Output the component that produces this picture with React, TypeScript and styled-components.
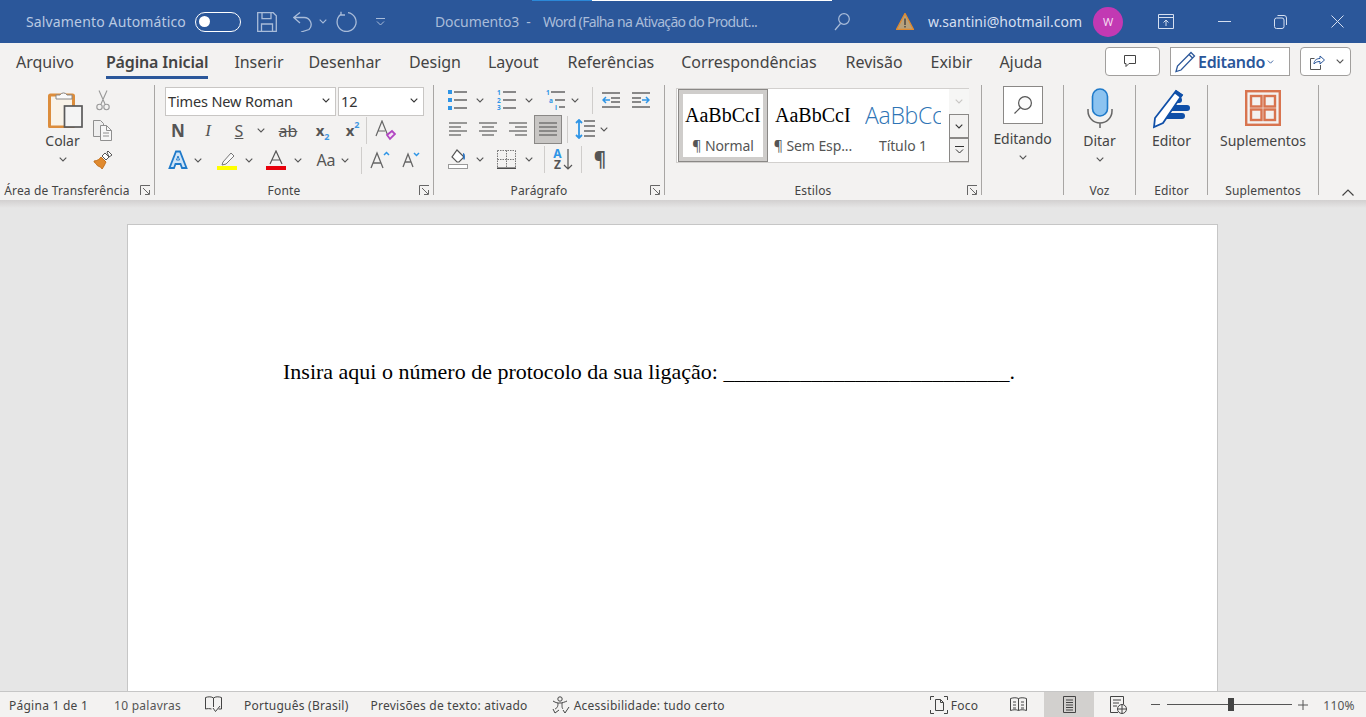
import React from "react";
import styled, { createGlobalStyle } from "styled-components";

const Global = createGlobalStyle`
  html, body { margin: 0; padding: 0; height: 100%; overflow: hidden; background: #e6e6e6; }
  body { font-family: "Noto Sans", "Open Sans", sans-serif; }
  * { box-sizing: border-box; }
  svg { display: block; }
`;

const Shell = styled.div`
  width: 1366px; height: 717px; display: flex; flex-direction: column; overflow: hidden;
`;
const TitleBar = styled.header`
  position: relative; height: 43px; flex: none; background: #2b579a; display: flex; align-items: center;
`;
const TitleStrip = styled.div`
  position: absolute; top: 0; left: 532px; width: 300px; height: 1px;
  background: linear-gradient(90deg, #2b88d8 0 60px, #ffffff 60px);
`;
const TitleText = styled.span<{ $ml: number; $w?: number; $c?: string; $ls: number }>`
  margin-left: ${(p) => p.$ml}px; width: ${(p) => (p.$w ? `${p.$w}px` : "auto")};
  color: ${(p) => p.$c || "#b9c9e2"}; font-size: 14px; letter-spacing: ${(p) => p.$ls}px;
  white-space: pre; flex: none;
`;
const TitleIcon = styled.span<{ $ml: number; $w: number }>`
  margin-left: ${(p) => p.$ml}px; width: ${(p) => p.$w}px; flex: none; display: flex; justify-content: center; align-items: center;
`;
const Toggle = styled.span`
  margin-left: 9px; width: 46px; height: 20px; border: 1.5px solid #fff; border-radius: 10px; flex: none;
  display: flex; align-items: center; padding-left: 3px;
`;
const ToggleKnob = styled.span`
  width: 11px; height: 11px; border-radius: 50%; background: #fff;
`;
const Avatar = styled.span`
  margin-left: 11px; width: 30px; height: 30px; border-radius: 50%; background: #c239b3; color: #f6d9f2;
  font-size: 11px; display: flex; align-items: center; justify-content: center; flex: none;
`;

const TabRow = styled.nav`
  height: 37px; flex: none; background: #f3f2f1; display: flex; align-items: flex-start; padding-left: 16px;
`;
const Tab = styled.span<{ $active?: boolean; $ml: number }>`
  margin-left: ${(p) => p.$ml}px; height: 36px; padding-top: 8px; font-size: 16px; line-height: 22px; color: #444;
  letter-spacing: ${(p) => (p.$active ? "-0.15px" : "-0.04px")}; white-space: nowrap; flex: none;
  font-weight: ${(p) => (p.$active ? 600 : 400)};
  border-bottom: 3px solid ${(p) => (p.$active ? "#2b579a" : "transparent")};
`;
const TabActions = styled.div`
  margin-left: auto; margin-right: 15px; display: flex; gap: 10px; padding-top: 4px;
`;
const ActionButton = styled.span<{ $w: number; $square?: boolean; $gap?: number; $pad?: string }>`
  width: ${(p) => p.$w}px; height: 29px; background: #fff; border: 1px solid #a19f9d;
  border-radius: ${(p) => (p.$square ? "0" : "4px")}; display: flex; align-items: center; justify-content: flex-start;
  gap: ${(p) => p.$gap ?? 3}px; padding: ${(p) => p.$pad || "0"};
  color: #2b579a; font-size: 16px; font-weight: 600; letter-spacing: -0.3px;
`;

const Ribbon = styled.section`
  height: 120px; flex: none; background: #f3f2f1; display: flex; padding-top: 5px; position: relative;
`;
const Group = styled.div<{ $w: number }>`
  width: ${(p) => p.$w}px; height: 110px; flex: none; border-right: 1px solid #a8a6a4; display: flex; flex-direction: column;
`;
const GroupBody = styled.div`
  flex: 1; min-height: 0; display: flex; flex-direction: column;
`;
const GroupFooter = styled.div<{ $launcher?: boolean }>`
  position: relative; height: 20px; flex: none; text-align: center; font-size: 12px; line-height: 32px; color: #444;
  letter-spacing: 0.15px; white-space: nowrap; padding-right: ${(p) => (p.$launcher ? "20px" : "0")};
`;
const Launcher = styled.span`
  position: absolute; right: 3px; top: 10px;
`;
const Collapse = styled.span`
  position: absolute; left: 1342px; top: 109px;
`;
const Row = styled.div<{ $h: number; $top?: number }>`
  height: ${(p) => p.$h}px; margin-top: ${(p) => p.$top || 0}px; display: flex; align-items: center; flex: none;
`;
const Cell = styled.span<{ $w: number; $ml?: number; $selected?: boolean }>`
  width: ${(p) => p.$w}px; margin-left: ${(p) => p.$ml || 0}px; flex: none; display: flex; align-items: center; justify-content: center;
  height: ${(p) => (p.$selected ? "29px" : "auto")};
  background: ${(p) => (p.$selected ? "#c8c6c4" : "transparent")};
  border: ${(p) => (p.$selected ? "1px solid #8a8886" : "none")};
`;
const RowSep = styled.span<{ $ml: number }>`
  width: 1px; height: 27px; margin-left: ${(p) => p.$ml}px; background: #cfcdcb; flex: none;
`;
const Combo = styled.span<{ $w: number; $ml: number }>`
  width: ${(p) => p.$w}px; height: 29px; margin-left: ${(p) => p.$ml}px; background: #fff; border: 1px solid #c8c6c4;
  display: flex; align-items: center; justify-content: space-between; padding: 0 5px 2px 2px; color: #333; font-size: 14.5px; letter-spacing: -0.13px;
`;
const Glyph = styled.span<{ $f?: string; $s: number; $b?: boolean; $i?: boolean; $u?: boolean; $st?: boolean; $c?: string }>`
  font-family: ${(p) => p.$f || '"Noto Sans", sans-serif'}; font-size: ${(p) => p.$s}px; line-height: 1;
  font-weight: ${(p) => (p.$b ? 700 : 400)}; font-style: ${(p) => (p.$i ? "italic" : "normal")};
  text-decoration: ${(p) => (p.$u ? "underline" : p.$st ? "line-through" : "none")}; color: ${(p) => p.$c || "#555"};
  position: relative; white-space: nowrap;
`;
const Sub = styled.span<{ $up?: boolean }>`
  position: absolute; left: 100%; ${(p) => (p.$up ? "top: -3px" : "bottom: -3px")}; color: #3d97e0; font-size: 9px; font-weight: 700;
`;
const SortWrap = styled.span`
  display: flex; align-items: center; gap: 1px;
`;
const SortLetters = styled.span`
  display: flex; flex-direction: column; align-items: center;
`;
const SortLetter = styled.span<{ $blue?: boolean }>`
  font-size: 12px; line-height: 11px; height: 11px; font-weight: 700; color: ${(p) => (p.$blue ? "#2e95e6" : "#555")}; overflow: visible;
`;

const LargeButton = styled.div<{ $pt: number }>`
  display: flex; flex-direction: column; align-items: center; padding-top: ${(p) => p.$pt}px; width: 100%;
`;
const LargeLabel = styled.span<{ $mt: number }>`
  margin-top: ${(p) => p.$mt}px; font-size: 14px; line-height: 20px; color: #444; letter-spacing: -0.05px; white-space: nowrap;
`;
const ChevWrap = styled.span<{ $mt: number }>`
  margin-top: ${(p) => p.$mt}px;
`;
const ClipArea = styled.div`
  display: flex; padding-left: 44px; height: 90px;
`;
const ClipLarge = styled.div`
  width: 37px; display: flex; flex-direction: column; align-items: center; padding-top: 5px;
`;
const ClipIcon = styled.span`
  margin-left: 3px; margin-right: -3px;
`;
const ClipSmall = styled.div`
  margin-left: 12px; width: 20px; display: flex; flex-direction: column; align-items: center; padding-top: 5px; gap: 9px;
`;
const SearchBox = styled.span`
  width: 40px; height: 38px; margin-top: 1px; background: #fff; border: 1px solid #8a8886; display: flex; align-items: center; justify-content: center;
`;

const Gallery = styled.div`
  margin: 3px 0 0 11px; width: 293px; height: 75px; background: #fff; border: 1px solid #d2d0ce; border-right: none;
  padding-left: 1px; display: flex; flex: none;
`;
const StyleItem = styled.div<{ $selected?: boolean }>`
  width: 90px; flex: none; display: flex; flex-direction: column; align-items: center; overflow: hidden;
  border: ${(p) => (p.$selected ? "1px solid #8a8886" : "none")};
  box-shadow: ${(p) => (p.$selected ? "inset 0 0 0 4px #cfcdcb" : "none")};
  padding-top: ${(p) => (p.$selected ? "12px" : "13px")};
`;
const StylePreview = styled.span<{ $sans?: boolean }>`
  font-family: ${(p) => (p.$sans ? '"Open Sans", "Noto Sans", sans-serif' : '"Liberation Serif", serif')};
  font-size: ${(p) => (p.$sans ? "23px" : "20px")}; line-height: 26px; height: 26px;
  font-weight: ${(p) => (p.$sans ? 300 : 400)};
  color: ${(p) => (p.$sans ? "#2e74b5" : "#000")}; white-space: nowrap; width: 76px; overflow: hidden; text-align: left;
  letter-spacing: ${(p) => (p.$sans ? "-0.3px" : "0")};
`;
const StyleName = styled.span`
  margin-top: 8px; color: #555; font-size: 14px; line-height: 20px; white-space: nowrap; letter-spacing: -0.1px;
`;
const ScrollColumn = styled.div`
  width: 20px; margin-left: 1px; flex: none; display: flex; flex-direction: column; background: #f3f2f1;
`;
const ScrollBtn = styled.span<{ $off?: boolean; $h: number }>`
  height: ${(p) => p.$h}px; display: flex; align-items: center; justify-content: center;
  border: ${(p) => (p.$off ? "none" : "1px solid #8a8886")}; background: ${(p) => (p.$off ? "#f6f6f5" : "#f3f2f1")};
`;

const Main = styled.main`
  flex: 1; min-height: 0; padding: 24px 0 0 127px; overflow: hidden;
  background: linear-gradient(#d2d0d0, #e6e6e6) top / 100% 8px no-repeat, #e6e6e6;
`;
const Page = styled.article`
  width: 1091px; height: 600px; background: #fff; border: 1px solid #c6c6c6; padding: 134px 0 0 155px;
`;
const Para = styled.p`
  margin: 0; font-family: "Liberation Serif", "Times New Roman", serif; font-size: 22px; line-height: 26px; color: #000; white-space: pre;
`;

const StatusBar = styled.footer`
  height: 26px; flex: none; background: #f3f2f1; border-top: 1px solid #c6c6c6; display: flex; align-items: center;
  font-size: 12px; color: #444; position: relative;
`;
const StatusText = styled.span<{ $ml: number; $c?: string }>`
  margin-left: ${(p) => p.$ml}px; padding-top: 1px; color: ${(p) => p.$c || "#444"}; white-space: nowrap; flex: none; letter-spacing: 0.25px;
`;
const StatusIcon = styled.span<{ $ml: number; $w: number }>`
  margin-left: ${(p) => p.$ml}px; width: ${(p) => p.$w}px; flex: none; display: flex; justify-content: center;
`;
const ViewSelected = styled.span`
  margin-left: 17px; width: 50px; height: 25px; background: #d2d0ce; flex: none; display: flex; align-items: center; justify-content: center;
`;
const SliderTrack = styled.span`
  position: relative; margin-left: 7px; width: 125px; height: 1px; background: #555; flex: none;
`;
const SliderThumb = styled.span`
  position: absolute; left: 61px; top: -6px; width: 6px; height: 13px; background: #444;
`;

const Chev = ({ c = "#555", s = 8 }: { c?: string; s?: number }) => (
  <svg width={s} height={s - 3} viewBox="0 0 8 5" fill="none"><path d="M.7.7 4 4l3.3-3.3" stroke={c} strokeWidth="1.1" /></svg>
);
const LauncherIcon = () => (
  <svg width="11" height="11" viewBox="0 0 11 11" fill="none" stroke="#666"><path d="M.5 10V.5H10M3 3l6 6M5 9.5h4.5V5" /></svg>
);
const Lines = ({ pattern, w = 18 }: { pattern: [number, number, number?][]; w?: number }) => (
  <svg width={w} height="16" viewBox={`0 0 ${w} 16`} stroke="#666" strokeWidth="1.3">
    {pattern.map(([x, l, y], i) => <path key={i} d={`M${x} ${y ?? 2 + i * 4}h${l}`} />)}
  </svg>
);
const Bullets = () => (
  <svg width="19" height="20" viewBox="0 0 19 20">
    <path fill="#2e95e6" d="M0 0h4v4H0zM0 8h4v4H0zM0 16h4v4H0z" />
    <path stroke="#666" strokeWidth="1.3" d="M6 2h13M6 10h13M6 18h13" />
  </svg>
);
const Numbers = () => (
  <svg width="19" height="24" viewBox="0 0 19 24">
    <text x="0" y="7" fontSize="6.5" fontWeight="700" fill="#2e95e6" fontFamily="Noto Sans">1</text>
    <text x="0" y="14.500" fontSize="6.5" fontWeight="700" fill="#2e95e6" fontFamily="Noto Sans">2</text>
    <text x="0" y="22" fontSize="6.5" fontWeight="700" fill="#2e95e6" fontFamily="Noto Sans">3</text>
    <path stroke="#666" strokeWidth="1.3" d="M6 4h13M6 12h13M6 20h13" />
  </svg>
);
const Multi = () => (
  <svg width="19" height="24" viewBox="0 0 19 24">
    <text x="0" y="7" fontSize="6.5" fontWeight="700" fill="#2e95e6" fontFamily="Noto Sans">1</text>
    <text x="3" y="14.500" fontSize="6.5" fontWeight="700" fill="#2e95e6" fontFamily="Noto Sans">a</text>
    <text x="9" y="22" fontSize="6.5" fontWeight="700" fill="#2e95e6" fontFamily="Noto Sans">i</text>
    <path stroke="#666" strokeWidth="1.3" d="M5 4h14M9 12h10M13 19h6" />
  </svg>
);
const Indent = ({ flip }: { flip?: boolean }) => (
  <svg width="18" height="16" viewBox="0 0 18 16" style={flip ? { transform: "scaleX(-1)" } : undefined}>
    <path stroke="#666" strokeWidth="1.3" d="M0 1h18M9 6h9M9 10h9M0 15h18" />
    <path stroke="#2e95e6" strokeWidth="1.5" fill="none" d="M8 8H1M4 5 1 8l3 3" />
  </svg>
);
const LineSpacing = () => (
  <svg width="20" height="20" viewBox="0 0 20 20" fill="none">
    <path stroke="#2e95e6" strokeWidth="1.8" d="M4 1v18M1 4l3-3 3 3M1 16l3 3 3-3" />
    <path stroke="#666" strokeWidth="1.3" d="M9 2h11M9 7h11M9 12h11M9 17h11" />
  </svg>
);
const Shade = () => (
  <svg width="20" height="20" viewBox="0 0 20 20">
    <path fill="#fff" stroke="#555" strokeWidth="1.2" d="m9 1 7 7-5 5H9L4 8z" />
    <path fill="#1f6fc4" d="M15 4c1 0 1.8 1 1.8 2.5v4h-1.4z" />
    <rect x=".5" y="15.5" width="19" height="4" fill="#fff" stroke="#999" />
  </svg>
);
const Borders = () => (
  <svg width="19" height="19" viewBox="0 0 19 19" fill="none">
    <path stroke="#777" strokeDasharray="1.5 1" d="M.5.5h18M.5 9.5h18M.5.5v18M9.5.5v18M18.5.5v18" />
    <path stroke="#444" strokeWidth="1.5" d="M0 18.2h19" />
  </svg>
);
const Clipboard = () => (
  <svg width="35" height="38" viewBox="0 0 35 38" fill="none">
    <rect x="1.5" y="5" width="24" height="32" rx="1" fill="#f9f3e8" stroke="#dc8d3c" strokeWidth="3" />
    <path d="M8 9V5h4a4 4 0 0 1 7 0h5v4z" fill="#fafafa" stroke="#8a8886" />
    <rect x="16.500" y="16" width="17.500" height="21" fill="#f4f4f4" stroke="#5a5a5a" strokeWidth="1.7" />
  </svg>
);
const Scissors = () => (
  <svg width="14" height="21" viewBox="0 0 14 21" fill="none" stroke="#999" strokeWidth="1.1">
    <path d="M3 .5 9 14M11 .5 5 14" />
    <circle cx="3.5" cy="17" r="2.7" /><circle cx="10.5" cy="17" r="2.7" />
  </svg>
);
const CopyIcon = () => (
  <svg width="20" height="21" viewBox="0 0 20 21" fill="none" stroke="#8f8f8f">
    <path d="M.5.5h7l3 3v13H.5z" fill="#eeeeee" />
    <path d="M7.5 5.5h6l5 5v10h-11z" fill="#f7f7f7" />
    <path d="M13.5 5.5v5h5M10 13h6M10 16h6" />
  </svg>
);
const Painter = () => (
  <svg width="20" height="20" viewBox="0 0 20 20">
    <path fill="#e08a2e" stroke="#c4701c" d="M1 11c3 0 6-2 7-4l5 5c-1 2-3 6-4 7-1-1-1-2-2-2-1-1-3-1-3-2-1-2-3-2-3-4z" />
    <path fill="#fff" stroke="#555" d="m9 6 3-3 4 4-3 3zM14 2l1-1 4 4-3 2z" />
  </svg>
);
const Mic = () => (
  <svg width="26" height="40" viewBox="0 0 26 40" fill="none">
    <rect x="5.5" y="1" width="15" height="27" rx="7.5" fill="#8cc3f0" stroke="#1f7ac9" strokeWidth="1.6" />
    <path d="M1 21v2a12 12 0 0 0 24 0v-2M13 35v5" stroke="#666" strokeWidth="1.5" />
  </svg>
);
const EditorIcon = () => (
  <svg width="40" height="40" viewBox="0 0 40 40">
    <path fill="#0f4fa8" d="M14 16h21a3 3 0 0 1 0 6H13zM12 24h18a3 3 0 0 1 0 6H10zM20 8h7a3 3 0 0 1 0 6h-9z" />
    <path fill="#fff" stroke="#0f4fa8" strokeWidth="1.8" d="M24 2 30 6 11 34 2 38 3 29z" />
    <path fill="#0f4fa8" d="m24 1 7 5-2.500 3-6.500-5z" />
  </svg>
);
const AddIns = () => (
  <svg width="36" height="36" viewBox="0 0 36 36" fill="none" stroke="#d8744f" strokeWidth="2.400">
    <rect x="1.200" y="1.200" width="33.600" height="33.600" />
    <rect x="6" y="6" width="10.500" height="10.500" /><rect x="19.500" y="6" width="10.500" height="10.500" />
    <rect x="6" y="19.500" width="10.500" height="10.500" /><rect x="19.500" y="19.500" width="10.500" height="10.500" />
  </svg>
);

const Dim = "#a9bcd9";

export default function App() {
  return (
    <Shell>
      <Global />
      <TitleBar>
        <TitleStrip />
        <TitleText $ml={26} $ls={0.15}>Salvamento Automático</TitleText>
        <Toggle><ToggleKnob /></Toggle>
        <TitleIcon $ml={16} $w={20}>
          <svg width="20" height="20" viewBox="0 0 20 20" fill="none" stroke={Dim} strokeWidth="1.3"><path d="M.7.7h15.500l3.100 3.100v15.500H.7zM5 .7v6h9v-6M4.500 19v-7h11v7" /></svg>
        </TitleIcon>
        <TitleIcon $ml={16} $w={19}>
          <svg width="19" height="20" viewBox="0 0 19 20" fill="none" stroke={Dim} strokeWidth="1.3"><path d="M7 .5.800 5.500 7 11M.8 5.500H11a7 7 0 0 1 5 12L8 20" /></svg>
        </TitleIcon>
        <TitleIcon $ml={7} $w={8}><Chev c={Dim} /></TitleIcon>
        <TitleIcon $ml={9} $w={21}>
          <svg width="21" height="21" viewBox="0 0 21 21" fill="none" stroke={Dim} strokeWidth="1.3"><path d="M12 1.600A9.500 9.500 0 1 1 5 3.300M5 .8v3.200h4" /></svg>
        </TitleIcon>
        <TitleIcon $ml={19} $w={9}>
          <svg width="9" height="8" viewBox="0 0 9 8" fill="none" stroke={Dim}><path d="M0 .5h9M1 3.500l3.500 3.500L8 3.500" /></svg>
        </TitleIcon>
        <TitleText $ml={50} $w={108} $c="#a9bcd9" $ls={-0.1}>Documento3  -</TitleText>
        <TitleText $ml={0} $w={267} $c="#a9bcd9" $ls={-0.67}>Word (Falha na Ativação do Produt...</TitleText>
        <TitleIcon $ml={24} $w={16}>
          <svg width="16" height="18" viewBox="0 0 16 18" fill="none" stroke={Dim} strokeWidth="1.2"><circle cx="10" cy="6" r="5.300" /><path d="M6.500 10.500 1 17" /></svg>
        </TitleIcon>
        <TitleIcon $ml={46} $w={18}>
          <svg width="18" height="17" viewBox="0 0 18 17"><path d="M9 .5 17.500 16.500H.5z" fill="#b8a27c" stroke="#e08a2e" strokeWidth="1.400" /><path d="M9 5.500v6.500M9 13v1.500" stroke="#3a3a3a" strokeWidth="1.300" /></svg>
        </TitleIcon>
        <TitleText $ml={14} $c="#d5dff0" $ls={0.04}>w.santini@hotmail.com</TitleText>
        <Avatar>W</Avatar>
        <TitleIcon $ml={35} $w={16}>
          <svg width="16" height="15" viewBox="0 0 16 15" fill="none" stroke="#d5dff0"><path d="M.5.500h15v14H.500zM.5 3.500h15M8 12V6M5.500 8.500 8 6l2.500 2.500" /></svg>
        </TitleIcon>
        <TitleIcon $ml={44} $w={13}>
          <svg width="13" height="1" viewBox="0 0 13 1"><path d="M0 .5h13" stroke="#d5dff0" /></svg>
        </TitleIcon>
        <TitleIcon $ml={43} $w={13}>
          <svg width="13" height="14" viewBox="0 0 13 14" fill="none" stroke="#d5dff0"><rect x=".5" y="3" width="9.500" height="10.500" rx="2" /><path d="M3.500.5H10a2.500 2.500 0 0 1 2.500 2.500v7" /></svg>
        </TitleIcon>
        <TitleIcon $ml={44} $w={13}>
          <svg width="13" height="13" viewBox="0 0 13 13" stroke="#d5dff0"><path d="m.5.500 12 12M12.500.500l-12 12" /></svg>
        </TitleIcon>
      </TitleBar>

      <TabRow>
        <Tab $ml={0}>Arquivo</Tab>
        <Tab $ml={32} $active>Página Inicial</Tab>
        <Tab $ml={26}>Inserir</Tab>
        <Tab $ml={25}>Desenhar</Tab>
        <Tab $ml={28}>Design</Tab>
        <Tab $ml={27}>Layout</Tab>
        <Tab $ml={29}>Referências</Tab>
        <Tab $ml={27}>Correspondências</Tab>
        <Tab $ml={29}>Revisão</Tab>
        <Tab $ml={28}>Exibir</Tab>
        <Tab $ml={27}>Ajuda</Tab>
        <TabActions>
          <ActionButton $w={55} $pad="0 0 0 16px">
            <svg width="16" height="15" viewBox="0 0 16 15" fill="none" stroke="#444"><path d="M2.500 1.500h11v8H7l-3 3v-3H2.500z" /></svg>
          </ActionButton>
          <ActionButton $w={120} $square $gap={2} $pad="0 0 0 3px">
            <svg width="22" height="22" viewBox="0 0 22 22" fill="none" stroke="#2b579a" strokeWidth="1.300"><path d="M17 1.500 20.500 5 7 19l-5 1.500L3.500 15zM15 3.500 18.500 7" /></svg>
            Editando
            <Chev c="#2b579a" s={7} />
          </ActionButton>
          <ActionButton $w={51} $gap={11} $pad="0 0 0 8px">
            <svg width="16" height="16" viewBox="0 0 16 16" fill="none" stroke="#555"><path d="M5.500 4.500h-4v11h10V11" /><path stroke="#2b579a" d="M5 10c0-4 3-5.500 6-5.500V2l4.500 4L11 10V7.500c-3 0-5 1-6 2.500z" /></svg>
            <Chev />
          </ActionButton>
        </TabActions>
      </TabRow>

      <Ribbon>
        <Group $w={155}>
          <GroupBody>
            <ClipArea>
              <ClipLarge>
                <ClipIcon><Clipboard /></ClipIcon>
                <LargeLabel $mt={3}>Colar</LargeLabel>
                <ChevWrap $mt={6}><Chev /></ChevWrap>
              </ClipLarge>
              <ClipSmall>
                <Scissors />
                <CopyIcon />
                <Painter />
              </ClipSmall>
            </ClipArea>
          </GroupBody>
          <GroupFooter $launcher>Área de Transferência<Launcher><LauncherIcon /></Launcher></GroupFooter>
        </Group>

        <Group $w={279}>
          <GroupBody>
            <Row $h={29} $top={2}>
              <Combo $w={171} $ml={10}>Times New Roman<Chev c="#333" /></Combo>
              <Combo $w={86} $ml={2}>12<Chev c="#333" /></Combo>
            </Row>
            <Row $h={29}>
              <Cell $w={30} $ml={8}><Glyph $s={17} $b $c="#555">N</Glyph></Cell>
              <Cell $w={30}><Glyph $s={17} $i $f='"Liberation Serif", serif'>I</Glyph></Cell>
              <Cell $w={30} $ml={1}><Glyph $s={16} $u>S</Glyph></Cell>
              <Cell $w={14}><Chev /></Cell>
              <Cell $w={28} $ml={6}><Glyph $s={16} $st>ab</Glyph></Cell>
              <Cell $w={28} $ml={4}><Glyph $s={15} $b>x<Sub>2</Sub></Glyph></Cell>
              <Cell $w={28} $ml={2}><Glyph $s={15} $b>x<Sub $up>2</Sub></Glyph></Cell>
              <RowSep $ml={2} />
              <Cell $w={30} $ml={3}>
                <svg width="21" height="21" viewBox="0 0 21 21" fill="none"><path d="m1 16 6-15 6 15M3 11h7" stroke="#666" strokeWidth="1.200" /><path d="m12 15 5-4 3 3-5 5z" fill="#f4e4f4" stroke="#b146c2" strokeWidth="1.800" /></svg>
              </Cell>
            </Row>
            <Row $h={30}>
              <Cell $w={30} $ml={8}>
                <svg width="20" height="20" viewBox="0 0 20 20" fill="none"><path d="M1.500 18 8 1.500h4L18.500 18H14l-1.500-4h-5L6 18z" fill="#cfe4f7" stroke="#1f7ac9" strokeWidth="1.800" /><path d="m8.500 10 1.500-4 1.500 4z" fill="#fff" stroke="#1f7ac9" /></svg>
              </Cell>
              <Cell $w={10}><Chev /></Cell>
              <Cell $w={30} $ml={9}>
                <svg width="20" height="20" viewBox="0 0 20 20"><path d="m6 12 8-9 3 3-8 8-4 1z" fill="#fafafa" stroke="#777" /><path d="M0 16h20v4H0z" fill="#ffff00" /></svg>
              </Cell>
              <Cell $w={10} $ml={2}><Chev /></Cell>
              <Cell $w={30} $ml={7}>
                <svg width="20" height="20" viewBox="0 0 20 20" fill="none"><path d="m4 14 6-13 6 13M6 10h8" stroke="#555" strokeWidth="1.200" /><path d="M0 16h20v4H0z" fill="#e8000b" /></svg>
              </Cell>
              <Cell $w={10} $ml={2}><Chev /></Cell>
              <Cell $w={28} $ml={9}><Glyph $s={16} $c="#555">Aa</Glyph></Cell>
              <Cell $w={10}><Chev /></Cell>
              <RowSep $ml={11} />
              <Cell $w={30} $ml={3}>
                <svg width="20" height="18" viewBox="0 0 20 18" fill="none"><path d="m1 17 6-15 6 15M3 12h8" stroke="#666" strokeWidth="1.300" /><path d="m14 4 2.500-2.500L19 4" stroke="#2e95e6" strokeWidth="1.500" /></svg>
              </Cell>
              <Cell $w={30} $ml={1}>
                <svg width="18" height="16" viewBox="0 0 18 16" fill="none"><path d="m1 15 5-13 5 13M3 10h6" stroke="#666" strokeWidth="1.300" /><path d="m12 1 2.500 2.500L17 1" stroke="#2e95e6" strokeWidth="1.500" /></svg>
              </Cell>
            </Row>
          </GroupBody>
          <GroupFooter $launcher>Fonte<Launcher><LauncherIcon /></Launcher></GroupFooter>
        </Group>

        <Group $w={231}>
          <GroupBody>
            <Row $h={28} $top={1}>
              <Cell $w={19} $ml={14}><Bullets /></Cell>
              <Cell $w={10} $ml={8}><Chev /></Cell>
              <Cell $w={19} $ml={12}><Numbers /></Cell>
              <Cell $w={10} $ml={8}><Chev /></Cell>
              <Cell $w={19} $ml={12}><Multi /></Cell>
              <Cell $w={10} $ml={5}><Chev /></Cell>
              <RowSep $ml={12} />
              <Cell $w={18} $ml={9}><Indent /></Cell>
              <Cell $w={18} $ml={12}><Indent flip /></Cell>
            </Row>
            <Row $h={30}>
              <Cell $w={18} $ml={15}><Lines pattern={[[0, 18], [0, 12], [0, 18], [0, 12]]} /></Cell>
              <Cell $w={18} $ml={12}><Lines pattern={[[0, 18], [3, 12], [0, 18], [3, 12]]} /></Cell>
              <Cell $w={18} $ml={12}><Lines pattern={[[0, 18], [6, 12], [0, 18], [6, 12]]} /></Cell>
              <Cell $w={28} $ml={7} $selected><Lines pattern={[[0, 18], [0, 18], [0, 18], [0, 18]]} /></Cell>
              <RowSep $ml={5} />
              <Cell $w={20} $ml={7}><LineSpacing /></Cell>
              <Cell $w={10} $ml={4}><Chev /></Cell>
            </Row>
            <Row $h={30}>
              <Cell $w={20} $ml={14}><Shade /></Cell>
              <Cell $w={10} $ml={7}><Chev /></Cell>
              <Cell $w={19} $ml={12}><Borders /></Cell>
              <Cell $w={10} $ml={8}><Chev /></Cell>
              <RowSep $ml={10} />
              <Cell $w={22} $ml={7}>
                <SortWrap>
                  <SortLetters><SortLetter $blue>A</SortLetter><SortLetter>Z</SortLetter></SortLetters>
                  <svg width="10" height="22" viewBox="0 0 10 22" fill="none"><path stroke="#555" strokeWidth="1.2" d="M5 1v20M1 17l4 4 4-4" /></svg>
                </SortWrap>
              </Cell>
              <RowSep $ml={7} />
              <Cell $w={20} $ml={8}><Glyph $s={19} $b $c="#555">¶</Glyph></Cell>
            </Row>
          </GroupBody>
          <GroupFooter $launcher>Parágrafo<Launcher><LauncherIcon /></Launcher></GroupFooter>
        </Group>

        <Group $w={317}>
          <GroupBody>
            <Gallery>
              <StyleItem $selected><StylePreview>AaBbCcI</StylePreview><StyleName>¶ Normal</StyleName></StyleItem>
              <StyleItem><StylePreview>AaBbCcI</StylePreview><StyleName>¶ Sem Esp...</StyleName></StyleItem>
              <StyleItem><StylePreview $sans>AaBbCc</StylePreview><StyleName>Título 1</StyleName></StyleItem>
              <ScrollColumn>
                <ScrollBtn $off $h={25}><Chev c="#c8c6c4" /></ScrollBtn>
                <ScrollBtn $h={24}><Chev c="#333" /></ScrollBtn>
                <ScrollBtn $h={24}>
                  <svg width="9" height="8" viewBox="0 0 9 8" fill="none" stroke="#333"><path d="M0 .5h9M1 3.500l3.500 3.500L8 3.500" /></svg>
                </ScrollBtn>
              </ScrollColumn>
            </Gallery>
          </GroupBody>
          <GroupFooter $launcher>Estilos<Launcher><LauncherIcon /></Launcher></GroupFooter>
        </Group>

        <Group $w={82}>
          <GroupBody>
            <LargeButton $pt={0}>
              <SearchBox>
                <svg width="20" height="20" viewBox="0 0 20 20" fill="none" stroke="#555" strokeWidth="1.200"><circle cx="12" cy="8" r="6.400" fill="#fafafa" /><path d="M7.500 12.500 1.500 18.500" /></svg>
              </SearchBox>
              <LargeLabel $mt={5}>Editando</LargeLabel>
              <ChevWrap $mt={6}><Chev /></ChevWrap>
            </LargeButton>
          </GroupBody>
          <GroupFooter />
        </Group>

        <Group $w={72}>
          <GroupBody>
            <LargeButton $pt={3}>
              <Mic />
              <LargeLabel $mt={3}>Ditar</LargeLabel>
              <ChevWrap $mt={6}><Chev /></ChevWrap>
            </LargeButton>
          </GroupBody>
          <GroupFooter>Voz</GroupFooter>
        </Group>

        <Group $w={72}>
          <GroupBody>
            <LargeButton $pt={4}>
              <EditorIcon />
              <LargeLabel $mt={2}>Editor</LargeLabel>
            </LargeButton>
          </GroupBody>
          <GroupFooter>Editor</GroupFooter>
        </Group>

        <Group $w={111}>
          <GroupBody>
            <LargeButton $pt={5}>
              <AddIns />
              <LargeLabel $mt={5}>Suplementos</LargeLabel>
            </LargeButton>
          </GroupBody>
          <GroupFooter>Suplementos</GroupFooter>
        </Group>
        <Collapse>
          <svg width="12" height="7" viewBox="0 0 12 7" fill="none" stroke="#444" strokeWidth="1.200"><path d="m.5 6.500 5.500-5.500 5.500 5.500" /></svg>
        </Collapse>
      </Ribbon>

      <Main>
        <Page>
          <Para>{"Insira aqui o número de protocolo da sua ligação: __________________________."}</Para>
        </Page>
      </Main>

      <StatusBar>
        <StatusText $ml={9}>Página 1 de 1</StatusText>
        <StatusText $ml={26} $c="#555">10 palavras</StatusText>
        <StatusIcon $ml={24} $w={17}>
          <svg width="17" height="17" viewBox="0 0 17 17" fill="none" stroke="#444"><path d="M.5 1.500c3-1 6-1 8 .5 2-1.500 5-1.500 8-.5V13h-3M8.500 2v9M.5 1.500V13c2-.5 4-.5 6 0" /><path d="m8 12 2.500 3.500L15 10" /></svg>
        </StatusIcon>
        <StatusText $ml={22}>Português (Brasil)</StatusText>
        <StatusText $ml={22}>Previsões de texto: ativado</StatusText>
        <StatusIcon $ml={24} $w={18}>
          <svg width="18" height="18" viewBox="0 0 18 18" fill="none" stroke="#444"><circle cx="8" cy="3" r="2.200" /><path d="M1 5c3 2 5 2 7 2s5-1 7-2M6 7c0 4-1 5-3 6M10 7c0 4 0 5 1 6M1 13l2 4 4-3M11 14l2 3 4-6" /></svg>
        </StatusIcon>
        <StatusText $ml={4}>Acessibilidade: tudo certo</StatusText>
        <StatusIcon $ml={205} $w={18}>
          <svg width="18" height="18" viewBox="0 0 18 18" fill="none" stroke="#444"><path d="M5.500 3.500h5l3 3v8h-8z" /><path d="M10.500 3.500v3h3M.5 4V.5H4M14 .5h3.500V4M.5 14v3.500H4M14 17.500h3.500V14" /></svg>
        </StatusIcon>
        <StatusText $ml={3}>Foco</StatusText>
        <StatusIcon $ml={32} $w={17}>
          <svg width="17" height="15" viewBox="0 0 17 15" fill="none" stroke="#444"><path d="M.5 1.500c3-1 6-1 8 0 2-1 5-1 8 0v12c-3-1-6-1-8 0-2-1-5-1-8 0zM8.500 1.500v12M3 5h3M3 8h3M3 11h3M11 5h3M11 8h3M11 11h3" /></svg>
        </StatusIcon>
        <ViewSelected>
          <svg width="13" height="17" viewBox="0 0 13 17" fill="none" stroke="#444"><path d="M.5.500h12v16H.500zM3 4h7M3 6.500h7M3 9h7M3 11.500h7M3 14h7" /></svg>
        </ViewSelected>
        <StatusIcon $ml={16} $w={17}>
          <svg width="17" height="18" viewBox="0 0 17 18" fill="none" stroke="#444"><path d="M8 16.500H.5V.500h13v8M3 4h8M3 7h6M3 10h4" /><circle cx="12" cy="13" r="4.500" fill="#f3f2f1" /><path d="M7.500 13h9M12 8.500v9" /></svg>
        </StatusIcon>
        <StatusIcon $ml={24} $w={9}>
          <svg width="9" height="1" viewBox="0 0 9 1"><path d="M0 .5h9" stroke="#555" /></svg>
        </StatusIcon>
        <SliderTrack><SliderThumb /></SliderTrack>
        <StatusIcon $ml={6} $w={10}>
          <svg width="10" height="10" viewBox="0 0 10 10"><path d="M0 5h10M5 0v10" stroke="#555" /></svg>
        </StatusIcon>
        <StatusText $ml={15} $c="#555">110%</StatusText>
      </StatusBar>
    </Shell>
  );
}
